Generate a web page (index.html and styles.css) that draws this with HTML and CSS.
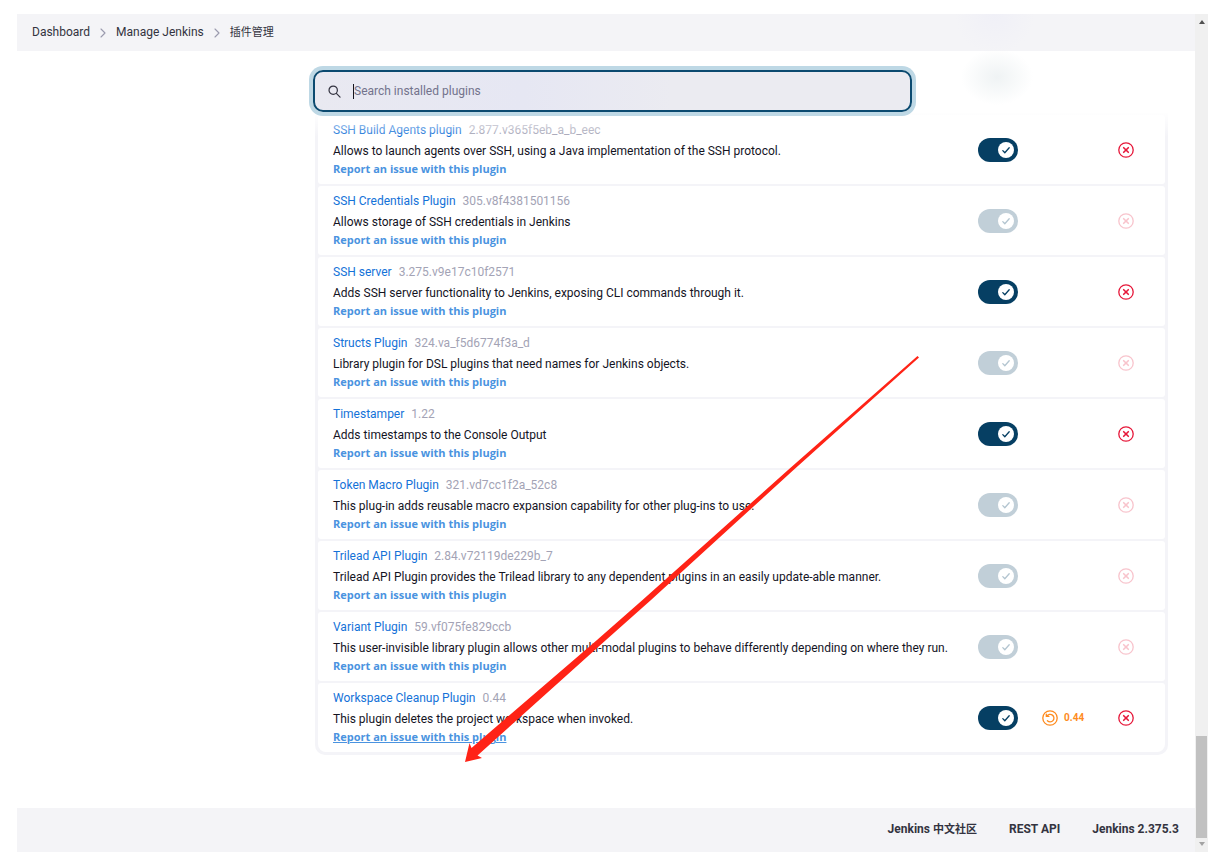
FILE: index.html
```html
<!DOCTYPE html>
<html lang="zh-CN">
<head>
<meta charset="utf-8">
<title>插件管理 [Jenkins]</title>
<link rel="stylesheet" href="styles.css">
</head>
<body>
<svg class="sprite" aria-hidden="true">
  <symbol id="chevron" viewBox="0 0 8 10"><path d="M2 1l4 4-4 4" fill="none" stroke="currentColor" stroke-width="1.1" stroke-linecap="round" stroke-linejoin="round"/></symbol>
  <symbol id="check" viewBox="0 0 16 16"><path d="M4.8 8.6l2 2.1 4.4-5" fill="none" stroke="currentColor" stroke-width="1.3" stroke-linecap="round" stroke-linejoin="round"/></symbol>
  <symbol id="remove" viewBox="0 0 16 16"><g fill="none" stroke="currentColor" stroke-linecap="round"><circle cx="8" cy="8" r="7.2" stroke-width="1.3"/><path d="M5.7 5.7l4.6 4.6M10.3 5.7l-4.6 4.6" stroke-width="1.6"/></g></symbol>
  <symbol id="revert" viewBox="0 0 16 16"><g fill="none" stroke="currentColor" stroke-width="1.3" stroke-linecap="round" stroke-linejoin="round"><circle cx="8" cy="8" r="7.2"/><path d="M4.9 6.200A3.800 3.800 0 1 1 5.400 10.800M4.300 4.200v2.200h2.600"/></g></symbol>
</svg>
<div class="window">
  <div class="page">
    <header>
      <nav class="breadcrumbs" aria-label="Breadcrumb">
        <a href="#">Dashboard</a>
        <svg class="sep" aria-hidden="true"><use href="#chevron"/></svg>
        <a href="#">Manage Jenkins</a>
        <svg class="sep" aria-hidden="true"><use href="#chevron"/></svg>
        <a class="zh" href="#">插件管理</a>
      </nav>
    </header>
    <main>
      <div class="search-bar">
        <label class="search">
          <svg class="search-icon" viewBox="0 0 14 14" aria-hidden="true"><circle cx="5.6" cy="5.6" r="4.5"/><path d="M9 9l4 4"/></svg>
          <span class="caret"></span>
          <input type="search" placeholder="Search installed plugins" aria-label="Search installed plugins">
        </label>
      </div>
      <div class="panel">
        <table class="plugins">
          <tbody>
            <tr>
              <td class="info"><div class="title"><a href="#">SSH Build Agents plugin</a><span>2.877.v365f5eb_a_b_eec</span></div><p>Allows to launch agents over SSH, using a Java implementation of the SSH protocol.</p><a class="report" href="#">Report an issue with this plugin</a></td>
              <td class="enable"><label class="toggle"><input type="checkbox" checked aria-label="Enable SSH Build Agents plugin"><svg><use href="#check"/></svg></label></td>
              <td class="downgrade"></td>
              <td class="uninstall"><button type="button" aria-label="Uninstall SSH Build Agents plugin"><svg><use href="#remove"/></svg></button></td>
            </tr>
            <tr>
              <td class="info"><div class="title"><a href="#">SSH Credentials Plugin</a><span>305.v8f4381501156</span></div><p>Allows storage of SSH credentials in Jenkins</p><a class="report" href="#">Report an issue with this plugin</a></td>
              <td class="enable"><label class="toggle locked"><input type="checkbox" checked disabled aria-label="Enable SSH Credentials Plugin"><svg><use href="#check"/></svg></label></td>
              <td class="downgrade"></td>
              <td class="uninstall"><button type="button" disabled aria-label="Uninstall SSH Credentials Plugin"><svg><use href="#remove"/></svg></button></td>
            </tr>
            <tr>
              <td class="info"><div class="title"><a href="#">SSH server</a><span>3.275.v9e17c10f2571</span></div><p>Adds SSH server functionality to Jenkins, exposing CLI commands through it.</p><a class="report" href="#">Report an issue with this plugin</a></td>
              <td class="enable"><label class="toggle"><input type="checkbox" checked aria-label="Enable SSH server"><svg><use href="#check"/></svg></label></td>
              <td class="downgrade"></td>
              <td class="uninstall"><button type="button" aria-label="Uninstall SSH server"><svg><use href="#remove"/></svg></button></td>
            </tr>
            <tr>
              <td class="info"><div class="title"><a href="#">Structs Plugin</a><span>324.va_f5d6774f3a_d</span></div><p>Library plugin for DSL plugins that need names for Jenkins objects.</p><a class="report" href="#">Report an issue with this plugin</a></td>
              <td class="enable"><label class="toggle locked"><input type="checkbox" checked disabled aria-label="Enable Structs Plugin"><svg><use href="#check"/></svg></label></td>
              <td class="downgrade"></td>
              <td class="uninstall"><button type="button" disabled aria-label="Uninstall Structs Plugin"><svg><use href="#remove"/></svg></button></td>
            </tr>
            <tr>
              <td class="info"><div class="title"><a href="#">Timestamper</a><span>1.22</span></div><p>Adds timestamps to the Console Output</p><a class="report" href="#">Report an issue with this plugin</a></td>
              <td class="enable"><label class="toggle"><input type="checkbox" checked aria-label="Enable Timestamper"><svg><use href="#check"/></svg></label></td>
              <td class="downgrade"></td>
              <td class="uninstall"><button type="button" aria-label="Uninstall Timestamper"><svg><use href="#remove"/></svg></button></td>
            </tr>
            <tr>
              <td class="info"><div class="title"><a href="#">Token Macro Plugin</a><span>321.vd7cc1f2a_52c8</span></div><p>This plug-in adds reusable macro expansion capability for other plug-ins to use.</p><a class="report" href="#">Report an issue with this plugin</a></td>
              <td class="enable"><label class="toggle locked"><input type="checkbox" checked disabled aria-label="Enable Token Macro Plugin"><svg><use href="#check"/></svg></label></td>
              <td class="downgrade"></td>
              <td class="uninstall"><button type="button" disabled aria-label="Uninstall Token Macro Plugin"><svg><use href="#remove"/></svg></button></td>
            </tr>
            <tr>
              <td class="info"><div class="title"><a href="#">Trilead API Plugin</a><span>2.84.v72119de229b_7</span></div><p>Trilead API Plugin provides the Trilead library to any dependent plugins in an easily update-able manner.</p><a class="report" href="#">Report an issue with this plugin</a></td>
              <td class="enable"><label class="toggle locked"><input type="checkbox" checked disabled aria-label="Enable Trilead API Plugin"><svg><use href="#check"/></svg></label></td>
              <td class="downgrade"></td>
              <td class="uninstall"><button type="button" disabled aria-label="Uninstall Trilead API Plugin"><svg><use href="#remove"/></svg></button></td>
            </tr>
            <tr>
              <td class="info"><div class="title"><a href="#">Variant Plugin</a><span>59.vf075fe829ccb</span></div><p>This user-invisible library plugin allows other multi-modal plugins to behave differently depending on where they run.</p><a class="report" href="#">Report an issue with this plugin</a></td>
              <td class="enable"><label class="toggle locked"><input type="checkbox" checked disabled aria-label="Enable Variant Plugin"><svg><use href="#check"/></svg></label></td>
              <td class="downgrade"></td>
              <td class="uninstall"><button type="button" disabled aria-label="Uninstall Variant Plugin"><svg><use href="#remove"/></svg></button></td>
            </tr>
            <tr>
              <td class="info"><div class="title"><a href="#">Workspace Cleanup Plugin</a><span>0.44</span></div><p>This plugin deletes the project workspace when invoked.</p><a class="report hovered" href="#">Report an issue with this plugin</a></td>
              <td class="enable"><label class="toggle"><input type="checkbox" checked aria-label="Enable Workspace Cleanup Plugin"><svg><use href="#check"/></svg></label></td>
              <td class="downgrade"><button type="button"><svg><use href="#revert"/></svg>0.44</button></td>
              <td class="uninstall"><button type="button" aria-label="Uninstall Workspace Cleanup Plugin"><svg><use href="#remove"/></svg></button></td>
            </tr>
          </tbody>
        </table>
      </div>
    </main>
    <footer>
      <a href="#">Jenkins <span class="zh">中文社区</span></a>
      <a href="#">REST API</a>
      <a href="#">Jenkins 2.375.3</a>
    </footer>
  </div>
  <div class="scrollbar" aria-hidden="true">
    <svg class="up" viewBox="0 0 6 4"><path d="M0 4l3-4 3 4z"/></svg>
    <div class="thumb"></div>
    <svg class="down" viewBox="0 0 6 4"><path d="M0 0l3 4 3-4z"/></svg>
  </div>
</div>
<svg class="arrow" viewBox="0 0 454 406" aria-hidden="true"><path d="M452.500 0L323 114 177.500 244 132 284 6.500 392 4.500 387 0 406 17 402 12.500 399.500 141 284 186 244 328.500 114 454 1.500z"/></svg>
</body>
</html>
```
FILE: styles.css
```css
* {
  box-sizing: border-box;
}

body {
  margin: 0;
  background: #fff;
  color: #14141f;
  font: 12px/17px Roboto, "Noto Sans CJK SC", sans-serif;
}

a {
  text-decoration: none;
}

button {
  display: flex;
  align-items: center;
  padding: 0;
  border: 0;
  background: none;
  font: inherit;
}

.sprite {
  display: none;
}

.window {
  display: flex;
  min-height: 100vh;
  padding: 14px 6px 9px 17px;
}

.page {
  flex: 1;
  display: flex;
  flex-direction: column;
}

header {
  background: radial-gradient(circle at 83% 0, #f0f0f7, #f4f4f7 40px);
}

.breadcrumbs {
  display: flex;
  align-items: center;
  gap: 9px;
  padding: 10px 15px;
}

.breadcrumbs a {
  color: #333340;
}

.breadcrumbs .zh,
footer .zh {
  font-size: 11px;
}

.sep {
  width: 8px;
  height: 10px;
  color: #9b9bae;
}

main {
  flex: 1;
  padding: 0 27px 0 296px;
}

.search-bar {
  position: relative;
  z-index: 1;
  padding: 19px 0 1px;
  background: radial-gradient(ellipse 36px 28px at 80% 26px, #eff3f4, #fff);
}

.search-bar::after {
  content: "";
  position: absolute;
  inset: 100% 0 auto;
  height: 24px;
  background: linear-gradient(#fffffff0, #ffffff00);
  pointer-events: none;
}

.search {
  position: relative;
  z-index: 1;
  display: flex;
  align-items: center;
  width: 70%;
  height: 42px;
  padding: 0 13px;
  border: 2px solid #0b4a70;
  border-radius: 10px;
  background: linear-gradient(90deg, #e9e9f1, #e6e7f3 35%, #ebebf1 60%);
  box-shadow: 0 0 0 4px #bed8e5;
}

.search-icon {
  width: 13px;
  height: 13px;
  margin-right: 12px;
  fill: none;
  stroke: #333340;
  stroke-width: 1.3;
  stroke-linecap: round;
}

.caret {
  width: 1px;
  height: 15px;
  background: #14141f;
}

.search input {
  flex: 1;
  min-width: 0;
  padding: 0;
  border: 0;
  outline: 0;
  background: none;
  font: inherit;
}

.search input::placeholder {
  color: #73738c;
  opacity: 1;
}

.panel {
  margin-left: 2px;
  padding: 0 3px 1px;
  border-radius: 0 0 10px 10px;
  background: #f4f4f8;
}

.plugins {
  width: 100%;
  border-spacing: 0 2px;
}

td {
  padding: 0;
  background: #fff;
}

td:first-child {
  border-radius: 3px 0 0 3px;
}

td:last-child {
  border-radius: 0 3px 3px 0;
}

tr:last-child td:first-child {
  border-bottom-left-radius: 8px;
}

tr:last-child td:last-child {
  border-bottom-right-radius: 8px;
}

.info {
  padding: 6px 0 7px 15px;
  white-space: nowrap;
}

.title {
  display: flex;
  gap: 7px;
  line-height: 18px;
}

.title a {
  color: #1472d8;
}

.title span {
  color: #a3a3b5;
}

.info p {
  margin: 4px 0 0;
}

.report {
  display: block;
  width: fit-content;
  color: #4a93e0;
  font-family: "Open Sans", sans-serif;
  font-size: 11px;
  font-weight: 700;
}

.hovered {
  text-decoration: underline;
}

.enable {
  width: 64px;
}

.toggle {
  display: grid;
  width: 40px;
  align-items: center;
}

.toggle input,
.toggle svg {
  grid-area: 1 / 1;
}

.toggle input {
  appearance: none;
  width: 40px;
  height: 24px;
  margin: 0;
  border-radius: 12px;
  background: #063f63;
}

.toggle svg {
  justify-self: end;
  width: 16px;
  height: 16px;
  margin-right: 4px;
  border-radius: 50%;
  background: #fff;
  color: #063f63;
  pointer-events: none;
}

.toggle.locked input {
  background: #c1cfd8;
}

.toggle.locked svg {
  color: #b3c5d0;
}

.downgrade {
  width: 76px;
}

.downgrade button {
  gap: 6px;
  color: #fe8b1e;
  font-size: 10px;
  font-weight: 700;
}

.uninstall {
  width: 47px;
}

.uninstall button {
  color: #e6183a;
}

.uninstall button:disabled {
  opacity: 0.25;
}

button svg {
  width: 16px;
  height: 16px;
}

footer {
  display: flex;
  justify-content: flex-end;
  gap: 32px;
  padding: 13px 16px 14px;
  background: #f4f4f7;
}

footer a {
  color: #333340;
  font-weight: 700;
}

.scrollbar {
  display: flex;
  flex-direction: column;
  align-items: center;
  width: 13px;
  padding: 6px 1px;
  background: #f0f0f0;
}

.scrollbar svg {
  width: 6px;
  height: 4px;
  fill: #505050;
}

.scrollbar .down {
  fill: #a3a3a3;
}

.thumb {
  width: 100%;
  height: 102px;
  margin: auto 0 4px;
  background: #c1c1c1;
}

.arrow {
  position: absolute;
  z-index: 2;
  left: 465px;
  top: 356px;
  width: 454px;
  height: 406px;
  fill: #ff2316;
  pointer-events: none;
}
```
